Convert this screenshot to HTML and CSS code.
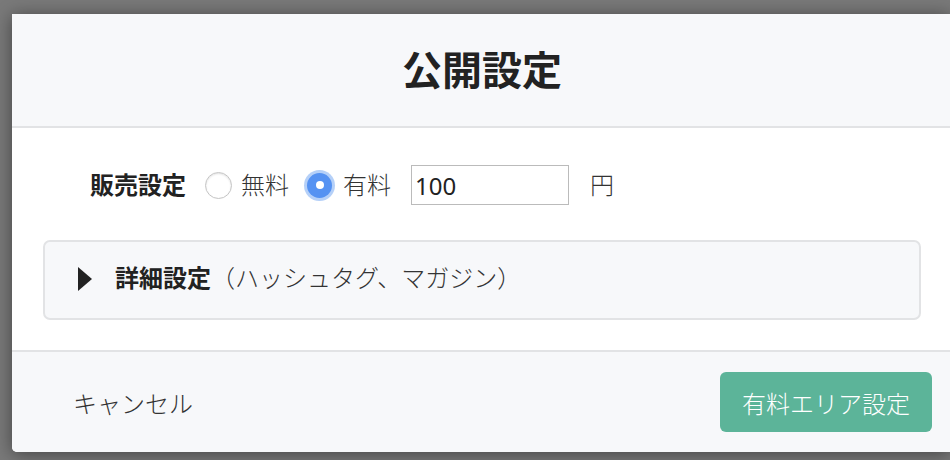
FILE: index.html
```html
<!DOCTYPE html>
<html>
<head>
    <title>公開設定</title>
    <link rel="stylesheet" href="styles.css">
</head>
<body>
    <div class="overlay">
        <div class="modal">
            <div class="modal-header">
                <h1>公開設定</h1>
            </div>
            <div class="modal-body">
                <div class="price-row">
                    <span class="row-label">販売設定</span>
                    <label class="radio"><span class="radio-mark"></span>無料</label>
                    <label class="radio checked"><span class="radio-mark"></span>有料</label>
                    <input type="text" class="price-input" value="100">
                    <span class="unit">円</span>
                </div>
                <div class="details">
                    <span class="caret"></span>
                    <span class="details-title"><b>詳細設定</b>（ハッシュタグ、マガジン）</span>
                </div>
            </div>
            <div class="modal-footer">
                <span class="cancel">キャンセル</span>
                <button class="btn-primary">有料エリア設定</button>
            </div>
        </div>
    </div>
</body>
</html>
```

FILE: styles.css
```css
body {
    margin: 0;
    background: #797979;
    font-family: "Noto Sans CJK JP", "Noto Sans", sans-serif;
    font-weight: 300;
    color: #333;
    overflow: hidden;
}
.overlay {
    padding: 14px 0 0 12px;
    height: 446px;
}
.modal {
    width: 938px;
    background: #fff;
    border-radius: 0 0 0 5px;
    box-shadow: 0 2px 18px rgba(0, 0, 0, 0.45);
    overflow: hidden;
}
.modal-header {
    height: 112px;
    background: #f7f8fa;
    border-bottom: 2px solid #e2e3e5;
    display: flex;
    align-items: center;
    justify-content: center;
}
h1 {
    margin: 0 0 4px 2px;
    font-size: 40px;
    font-weight: bold;
    color: #222;
}
.modal-body {
    padding: 37px 29px 30px 31px;
}
.price-row {
    display: flex;
    align-items: center;
    height: 40px;
    padding-left: 47px;
    font-size: 24px;
}
.row-label,
.radio,
.unit {
    padding-bottom: 4px;
}
.row-label {
    font-weight: bold;
    color: #222;
    margin-right: 19px;
}
.radio {
    display: flex;
    align-items: center;
    margin-right: 15px;
}
.radio-mark {
    width: 27px;
    height: 27px;
    border: 1px solid #c4c4c4;
    border-radius: 50%;
    background: #fff;
    box-shadow: inset 0 1px 2px rgba(0, 0, 0, 0.12);
    margin: 4px 9px 0 0;
    box-sizing: border-box;
}
.radio.checked .radio-mark {
    width: 25px;
    height: 25px;
    border: none;
    background: #5592f2;
    box-shadow: 0 0 0 3px rgba(92, 150, 240, 0.45);
    position: relative;
    margin-left: 3px;
    margin-right: 11px;
}
.radio.checked .radio-mark::after {
    content: "";
    position: absolute;
    left: 8.5px;
    top: 8.5px;
    width: 8px;
    height: 8px;
    border-radius: 50%;
    background: #fff;
}
.price-input {
    margin-left: 5px;
    width: 158px;
    height: 40px;
    box-sizing: border-box;
    border: 1px solid #bbb;
    padding: 0 3px;
    font-family: "Noto Sans", sans-serif;
    font-size: 24px;
    color: #222;
}
.unit {
    margin-left: 21px;
}
.details {
    margin-top: 35px;
    height: 80px;
    box-sizing: border-box;
    border: 2px solid #e2e3e5;
    border-radius: 7px;
    background: #f7f8fa;
    display: flex;
    align-items: center;
    padding: 0 0 2px 33px;
    font-size: 24px;
}
.caret {
    width: 0;
    height: 0;
    border-top: 12px solid transparent;
    border-bottom: 12px solid transparent;
    border-left: 14px solid #222;
    margin-right: 23px;
}
.details-title {
    padding-bottom: 5px;
}
.details-title b {
    font-weight: bold;
    color: #222;
}
.modal-footer {
    height: 100px;
    background: #f7f8fa;
    border-top: 2px solid #e2e3e5;
    display: flex;
    align-items: center;
    justify-content: space-between;
    padding: 0 18px 0 61px;
}
.cancel {
    font-size: 24px;
}
.btn-primary {
    height: 60px;
    width: 212px;
    border: none;
    border-radius: 6px;
    background: #5cb499;
    color: #fff;
    font-family: "Noto Sans CJK JP", sans-serif;
    font-weight: 300;
    font-size: 24px;
}
```
